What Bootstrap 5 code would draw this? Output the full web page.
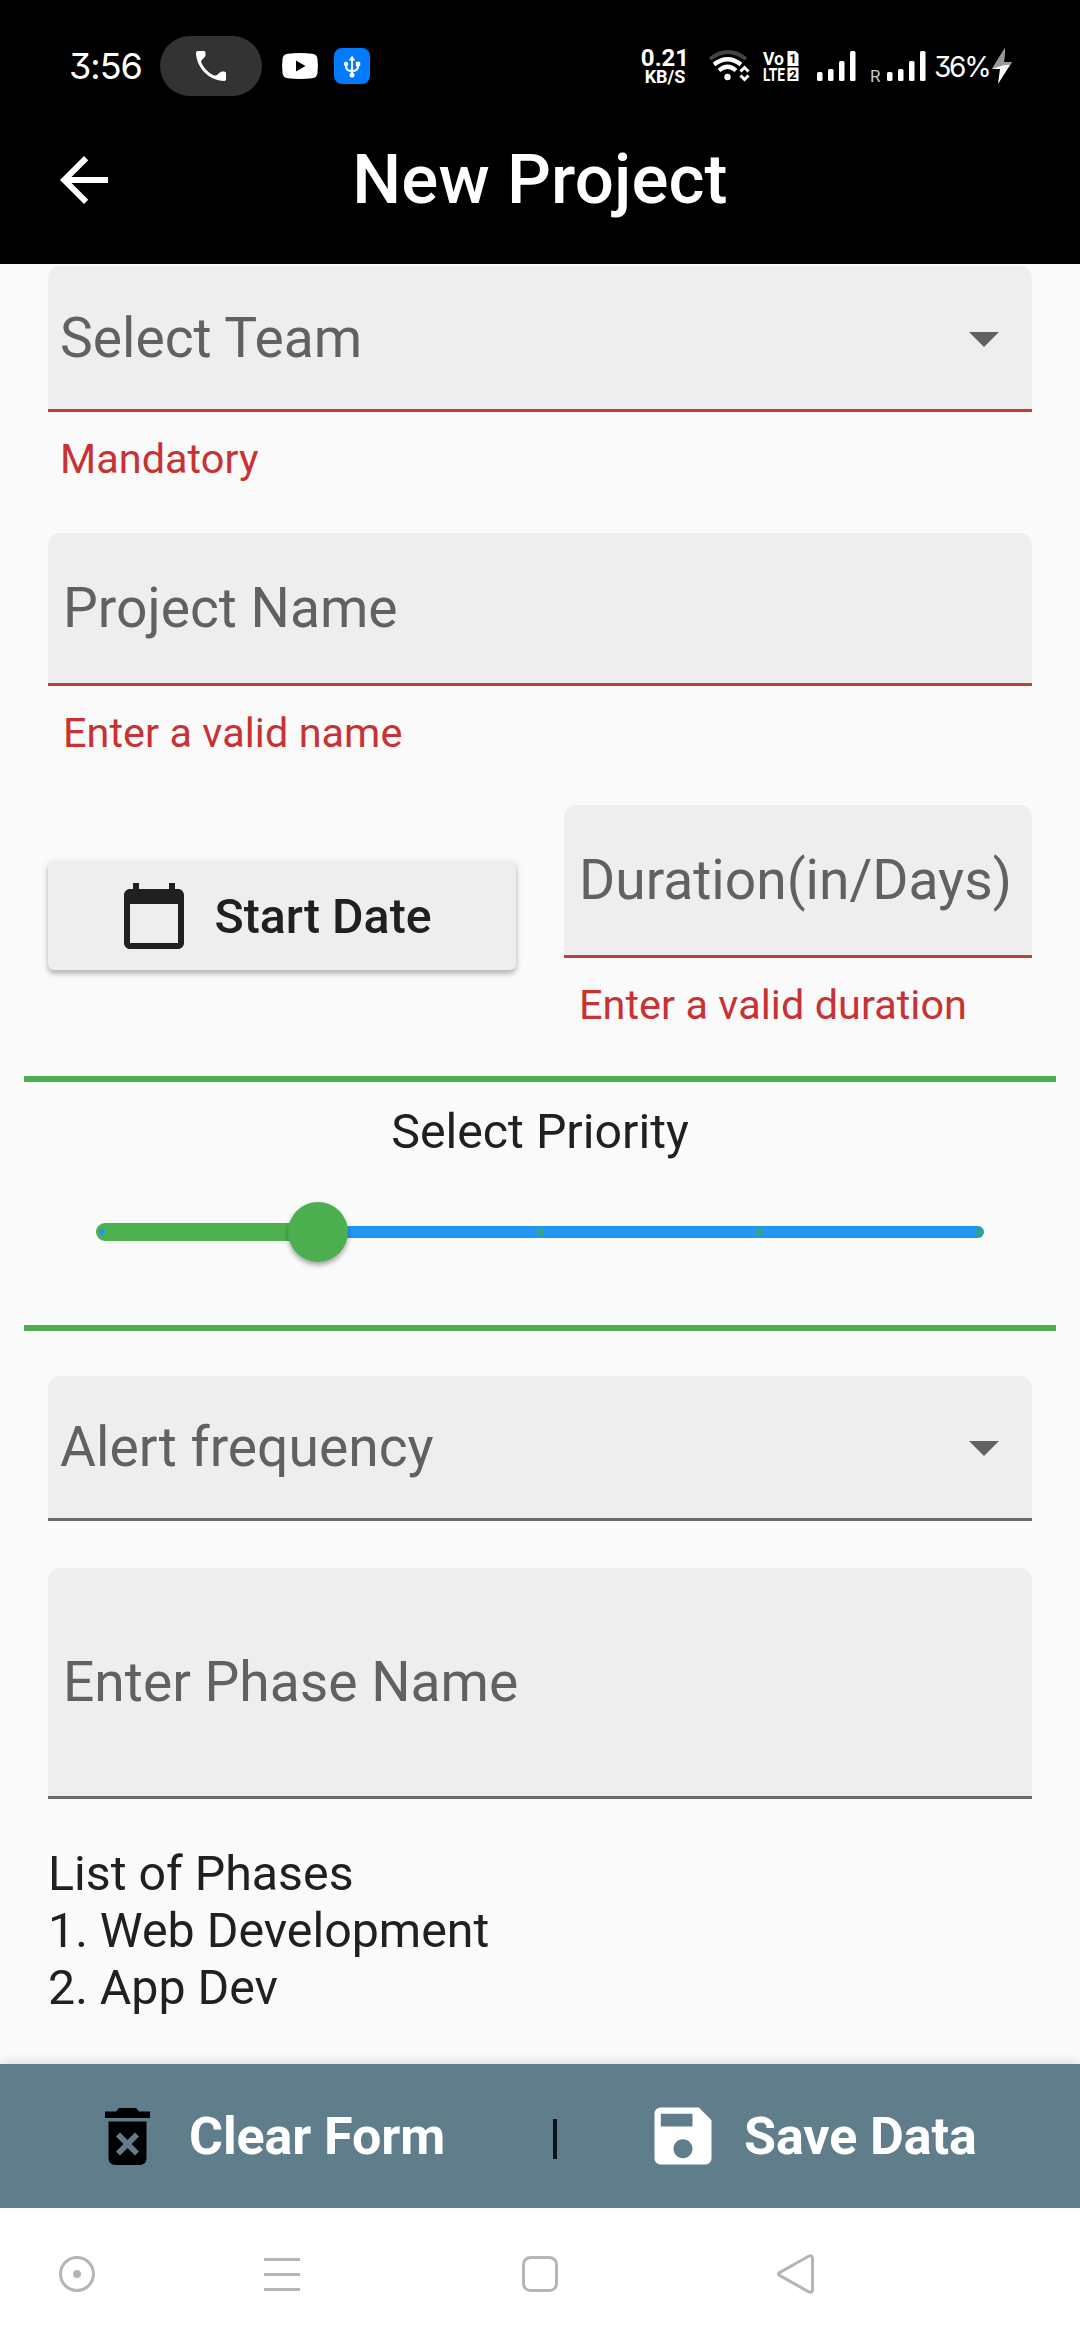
<!DOCTYPE html>
<html lang="en">
<head>
<meta charset="utf-8">
<meta name="viewport" content="width=device-width, initial-scale=1">
<title>New Project</title>
<link href="https://cdn.jsdelivr.net/npm/bootstrap@5.3.0/dist/css/bootstrap.min.css" rel="stylesheet">
<style>
  body { width: 1080px; height: 2340px; overflow: hidden; background: #fafafa; color: #202020; font-family: Roboto, "Liberation Sans", sans-serif; }
  svg { display: block; flex: none; overflow: visible; }
  .app-top { height: 264px; }
  .status-row { height: 132px; padding-left: 69px; font-family: Inter, Roboto, sans-serif; }
  .status-row > * { flex: none; }
  .clock { width: 91px; font-size: 36px; letter-spacing: -1px; font-feature-settings: "cv09"; line-height: 1; font-weight: 400; }
  .call-pill { width: 102px; height: 60px; background: #333; }
  .speed { width: 54px; margin-left: 268px; margin-right: 17px; font-family: Roboto, sans-serif; font-weight: 700; text-align: center; }
  .speed-n { font-size: 24px; line-height: 20px; }
  .speed-u { font-size: 18px; line-height: 17px; }
  .roam { font: 400 17px/1 Roboto, sans-serif; margin-left: 14px; width: 17px; padding-top: 20px; color: #ccc; }
  .battery { font-size: 28px; line-height: 1; width: 58px; margin-left: 8px; padding-top: 2px; font-feature-settings: "cv09"; font-weight: 400; letter-spacing: -2.3px; }
  .title-row { height: 96px; padding: 0 48px; }
  .page-title { font-size: 69px; font-weight: 500; letter-spacing: .1px; line-height: 80px; margin: 0; }
  .form-area { height: 1800px; padding-top: 2px; }
  .field { background: #eee; border-radius: 12px 12px 0 0; border-bottom: 3px solid #6b6b6b; color: #616161; font-size: 55.2px; padding: 0 10px 0 15px; white-space: nowrap; line-height: 64px; }
  .field-select { height: 146px; padding: 0 33px 0 12px; }
  .field-select svg { margin-top: 3px; }
  .field-text { height: 153px; }
  .field-phase { height: 231px; }
  .field-invalid { border-bottom-color: #bf3d3d; }
  .err { color: #c83232; font-size: 41.4px; letter-spacing: .05px; line-height: 48px; margin-top: 23px; padding-left: 15px; white-space: nowrap; }
  .date-row { margin-top: 48px; height: 271px; }
  .btn-date { width: 468px; height: 109px; margin-top: 56px; padding: 0; border: 0; border-radius: 6px; background: #eee; color: #202020; font-size: 48.3px; font-weight: 500; line-height: 1; box-shadow: 0 4px 5px rgba(0,0,0,.22), 0 1px 8px rgba(0,0,0,.1); }
  .btn-date span { margin-left: 24px; padding-top: 3px; margin-right: 14px; }
  .duration { width: 468px; }
  .priority { height: 255px; margin: 0 24px; border-top: 6px solid #4caf50; border-bottom: 6px solid #4caf50; font-size: 48.3px; }
  .priority-label { line-height: 57px; margin-top: 21px; }
  .phases { font-size: 48.3px; line-height: 57px; margin-top: 46px; }
  .action-bar { height: 144px; background: #607d8b; box-shadow: 0 -3px 9px rgba(0,0,0,.1); }
  .btn-act { color: #fff; font-size: 52px; font-weight: 700; line-height: 1; letter-spacing: -.1px; padding: 0; border: 0; white-space: nowrap; }
  .btn-act span { padding-top: 1px; }
  .split { width: 4px; height: 40px; background: #0b161b; margin-top: 5px; }
  .nav-sys { height: 132px; background: #fff; }
</style>
</head>
<body>
<header class="app-top bg-black text-white">
  <div class="status-row d-flex align-items-center">
    <span class="clock">3:56</span>
    <span class="call-pill rounded-pill d-flex align-items-center justify-content-center">
      <svg width="40" height="40" viewBox="0 0 24 24" fill="#fff"><path d="M6.600 10.800C4.900 8.400 8.400 7.600 8.700 5.600C8.700 4.500 8.900 3 7.700 3H4.300C3 3 3 4 3 4.500C3.700 13.400 10.600 20.600 20 21C20.600 21 21 20.600 21 20V16.400C21 15.400 20 15.400 18.600 15.300C17 15.300 15.700 18.800 13.200 17.400C10.400 15.900 8.100 13.700 6.600 10.800Z"/></svg>
    </span>
    <svg style="margin-left:20px" width="36" height="26" viewBox="0 0 36 26"><path d="M6 .8Q18-.6 30 .8Q35 1.200 35.500 6Q36.300 13 35.500 20Q35 24.800 30 25.200Q18 26.600 6 25.200Q1 24.800.5 20Q-.3 13 .5 6Q1 1.200 6 .8Z" fill="#fff"/><path d="M14 7.500v11l9.500-5.500z" fill="#000"/></svg>
    <svg style="margin-left:16px" width="36" height="36" viewBox="0 0 36 36"><rect width="36" height="36" rx="8" fill="#007bff"/><g stroke="#fff" stroke-width="2" fill="none"><path d="M18 10v18M12 16v2q0 5 6 5t6-5v-2"/></g><g fill="#fff"><path d="M18 7.500l3.200 5h-6.400z"/><circle cx="12" cy="16" r="2.300"/><rect x="21.800" y="13.800" width="4.400" height="4.400"/><circle cx="18" cy="27" r="2.500"/></g></svg>
    <div class="speed"><div class="speed-n">0.21</div><div class="speed-u">KB/S</div></div>
    <svg width="42" height="32" viewBox="0 0 42 32" fill="none"><path d="M1 9Q19-5 37 9" stroke="#444" stroke-width="4"/><path d="M5 14.500Q18.500 4 32 14.500M10 20.500Q18.500 13 27 20.500" stroke="#fff" stroke-width="4.200"/><circle cx="18.500" cy="27" r="3.200" fill="#fff"/><path d="M31.500 21.500l4-4 4 4M31.500 25.500l4 4 4-4" stroke="#fff" stroke-width="3"/></svg>
    <svg style="margin-left:12px" width="37" height="32" viewBox="0 0 37 32" font-family="Roboto, sans-serif" font-weight="700" fill="#fff"><text x="0" y="15" font-size="19" textLength="21" lengthAdjust="spacingAndGlyphs">Vo</text><text x="0" y="30.500" font-size="19" textLength="22" lengthAdjust="spacingAndGlyphs">LTE</text><path d="M24.500 1h8l3 3v12h-11zM24.500 17.500h11v13.500h-11z"/><g fill="#000" font-size="13" text-anchor="middle"><text x="30" y="13">1</text><text x="30" y="29">2</text></g></svg>
    <svg style="margin-left:17px" width="39" height="30" viewBox="0 0 39 30" fill="#fff"><rect y="21" width="5.500" height="9" rx="1.500"/><rect x="11" y="18" width="5.500" height="12" rx="1.500"/><rect x="22" y="10" width="5.500" height="20" rx="1.500"/><rect x="33" width="5.500" height="30" rx="1.500"/></svg>
    <span class="roam">R</span>
    <svg width="39" height="30" viewBox="0 0 39 30" fill="#fff"><rect y="21" width="5.500" height="9" rx="1.500"/><rect x="11" y="18" width="5.500" height="12" rx="1.500"/><rect x="22" y="10" width="5.500" height="20" rx="1.500"/><rect x="33" width="5.500" height="30" rx="1.500"/></svg>
    <span class="battery">36%</span>
    <svg width="20" height="36" viewBox="0 0 20 36"><path d="M13 0L0 21h8l2-6h10l-8-1z" fill="#999"/><path d="M0 21L13 0l-1 14h8z" fill="#999"/><path d="M0 21L20 14L6 36l2-15z" fill="#fff"/><path d="M0 21l9-4h9l2-3h-8L13 0z" fill="#999"/></svg>
  </div>
  <div class="title-row d-flex align-items-center justify-content-between">
    <svg width="72" height="72" viewBox="0 0 24 24" fill="#fff"><path d="M20 11H7.830l5.590-5.590L12 4l-8 8 8 8 1.410-1.410L7.830 13H20v-2z"/></svg>
    <h1 class="page-title">New Project</h1>
    <svg width="72" height="72"></svg>
  </div>
</header>

<main class="form-area">
  <div class="px-0 mx-5">
    <div class="field field-select field-invalid d-flex align-items-center justify-content-between">Select Team
      <svg width="30" height="15" viewBox="0 0 30 15"><path d="M0 0h30L15 15z" fill="#616161"/></svg></div>
    <div class="err" style="padding-left:12px">Mandatory</div>
    <div class="field field-text field-invalid d-flex align-items-center" style="margin-top:50px">Project Name</div>
    <div class="err">Enter a valid name</div>
    <div class="date-row d-flex justify-content-between align-items-start">
      <button type="button" class="btn btn-date d-flex align-items-center justify-content-center">
        <svg width="72" height="72" viewBox="0 0 24 24" fill="#202020"><path d="M20 3h-1V1h-2v2H7V1H5v2H4c-1.100 0-2 .9-2 2v16c0 1.100.9 2 2 2h16c1.100 0 2-.9 2-2V5c0-1.100-.9-2-2-2zm0 18H4V8h16v13z"/></svg>
        <span>Start Date</span>
      </button>
      <div class="duration">
        <div class="field field-text field-invalid d-flex align-items-center">Duration(in/Days)</div>
        <div class="err">Enter a valid duration</div>
      </div>
    </div>
  </div>

  <section class="priority text-center">
    <div class="priority-label">Select Priority</div>
    <svg width="1032" height="90" viewBox="24 1182 1032 90" style="margin-top:22px">
      <defs><filter id="sh" x="-30%" y="-30%" width="160%" height="160%"><feDropShadow dx="0" dy="3" stdDeviation="2.500" flood-opacity=".35"/></filter></defs>
      <rect x="300" y="1226" width="684" height="12" rx="6" fill="#2196f3"/>
      <rect x="96" y="1223" width="224" height="18" rx="9" fill="#4caf50"/>
      <circle cx="102" cy="1232" r="3" fill="#2196f3"/>
      <g fill="#36a57c"><circle cx="540" cy="1232" r="3.500"/><circle cx="759" cy="1232" r="3.500"/><circle cx="979" cy="1232" r="3.500"/></g>
      <circle cx="318" cy="1232" r="30" fill="#4caf50" filter="url(#sh)"/>
    </svg>
  </section>

  <div class="mx-5">
    <div class="field field-select d-flex align-items-center justify-content-between" style="margin-top:45px;height:145px">Alert frequency
      <svg width="30" height="15" viewBox="0 0 30 15"><path d="M0 0h30L15 15z" fill="#616161"/></svg></div>
    <div class="field field-phase d-flex align-items-center" style="margin-top:47px">Enter Phase Name</div>
    <div class="phases">List of Phases<br>1. Web Development<br>2. App Dev</div>
  </div>
</main>

<div class="action-bar d-flex align-items-center position-relative">
  <button type="button" class="btn btn-act d-flex align-items-center" style="margin-left:105px;width:448px">
    <svg width="45" height="57" viewBox="0 0 45 57"><path fill-rule="evenodd" d="M0 3.500h11l3-3.500h17l3 3.500h11V10H0zM3.500 13.500h38V50q0 7-7 7h-24q-7 0-7-7zM11 28.500l7.500 7.500-7.500 7.500 4 4 7.500-7.500 7.500 7.500 4-4-7.500-7.500 7.500-7.500-4-4-7.500 7.500-7.500-7.500z" fill="#000"/></svg>
    <span style="margin-left:39px">Clear Form</span>
  </button>
  <span class="split"></span>
  <button type="button" class="btn btn-act d-flex align-items-center" style="margin-left:88px">
    <svg width="76" height="76" viewBox="0 0 24 24" fill="#fff"><path d="M17 3H5c-1.110 0-2 .9-2 2v14c0 1.100.890 2 2 2h14c1.100 0 2-.9 2-2V7l-4-4zm-5 16c-1.660 0-3-1.340-3-3s1.340-3 3-3 3 1.340 3 3-1.340 3-3 3zm3-10H5V5h10v4z"/></svg>
    <span style="margin-left:23px">Save Data</span>
  </button>
</div>

<nav class="nav-sys d-flex align-items-center">
  <svg style="margin-left:57px" width="40" height="40" viewBox="0 0 40 40"><circle cx="20" cy="20" r="16.500" fill="none" stroke="#b5b5b5" stroke-width="3"/><circle cx="20" cy="20" r="4" fill="#b5b5b5"/></svg>
  <svg style="margin-left:167px" width="36" height="40" viewBox="0 0 36 40"><path d="M0 5.500h36M0 20.500h36M0 35.500h36" stroke="#b5b5b5" stroke-width="3"/></svg>
  <svg style="margin-left:220px" width="40" height="40" viewBox="0 0 40 40"><rect x="3.500" y="3.500" width="33" height="33" rx="7" fill="none" stroke="#b5b5b5" stroke-width="3"/></svg>
  <svg style="margin-left:215px" width="42" height="44" viewBox="0 0 42 44"><path d="M4.500 20.600L33.500 4.300Q37.500 2.500 37.500 6.500V37.500Q37.500 41.500 33.500 39.700L4.500 23.400Q2.500 22 4.500 20.600Z" fill="none" stroke="#b5b5b5" stroke-width="3"/></svg>
</nav>
<script src="https://cdn.jsdelivr.net/npm/bootstrap@5.3.0/dist/js/bootstrap.bundle.min.js"></script>
</body>
</html>
